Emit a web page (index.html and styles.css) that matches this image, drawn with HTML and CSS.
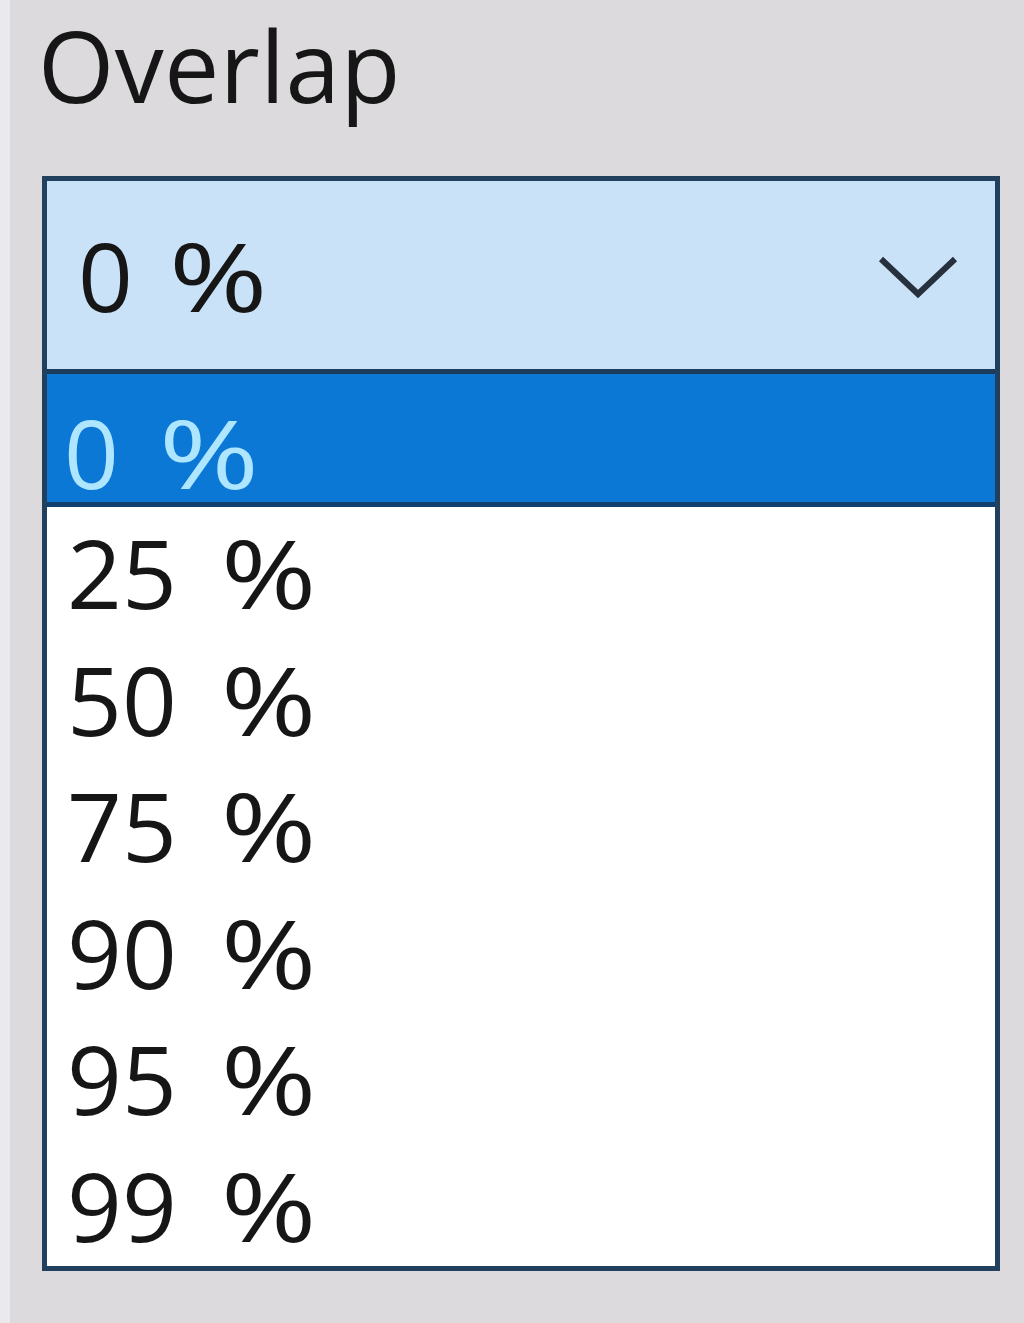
FILE: index.html
```html
<!DOCTYPE html>
<html>
<head>
<meta charset="utf-8">
<link rel="stylesheet" href="styles.css">
</head>
<body>
<div class="panel">
  <div class="label">Overlap</div>
  <div class="combo">
    <div class="combo-head">
      <span class="combo-value">0<span class="pct">%</span></span>
      <svg class="chev" width="90" height="50" viewBox="0 0 90 50">
        <polyline points="8,11 45,46 82,11" fill="none" stroke="#26313d" stroke-width="6"/>
      </svg>
    </div>
    <ul class="list">
      <li class="item selected">0<span class="pct">%</span></li>
      <li class="item">25<span class="pct">%</span></li>
      <li class="item">50<span class="pct">%</span></li>
      <li class="item">75<span class="pct">%</span></li>
      <li class="item">90<span class="pct">%</span></li>
      <li class="item">95<span class="pct">%</span></li>
      <li class="item">99<span class="pct">%</span></li>
    </ul>
  </div>
</div>
</body>
</html>
```

FILE: styles.css
```css
html, body {
  margin: 0;
  padding: 0;
  height: 100%;
  background: #dcdadc;
}
body {
  font-family: "Open Sans", "Noto Sans", sans-serif;
  color: #161616;
}
.panel {
  border-left: 10px solid #eaeaee;
  min-height: 1323px;
  box-sizing: border-box;
  padding: 0 24px 0 32px;
}
.label {
  font-size: 98px;
  line-height: 130px;
  margin: 0 0 46px -4px;
  letter-spacing: 0.5px;
}
.combo {
  border: 5px solid #21405e;
  width: 958px;
  box-sizing: border-box;
  background: #ffffff;
}
.combo-head {
  height: 193px;
  background: #c9e2f7;
  border-bottom: 5px solid #1d3b5b;
  display: flex;
  align-items: center;
  justify-content: space-between;
  padding: 0 32px 0 31px;
  box-sizing: border-box;
}
.combo-value {
  font-size: 96px;
  line-height: 96px;
}
.chev {
  display: block;
  margin-top: -4px;
  overflow: visible;
}
.pct {
  display: inline-block;
  margin-left: 44px;
  transform: scaleX(1.2);
  transform-origin: left center;
}
.combo-value .pct {
  margin-left: 36px;
  transform: scaleX(1.24);
}
.item.selected .pct {
  margin-left: 40px;
  transform: scaleX(1.26);
}
.list {
  list-style: none;
  margin: 0;
  padding: 0;
}
.item {
  font-size: 96px;
  height: 126.5px;
  line-height: 130px;
  padding-left: 20px;
  box-sizing: border-box;
}
.item.selected {
  height: 133px;
  line-height: 156px;
  background: #0a78d4;
  color: #aee6ff;
  border-bottom: 5px solid #12406e;
  padding-left: 17px;
}
```
